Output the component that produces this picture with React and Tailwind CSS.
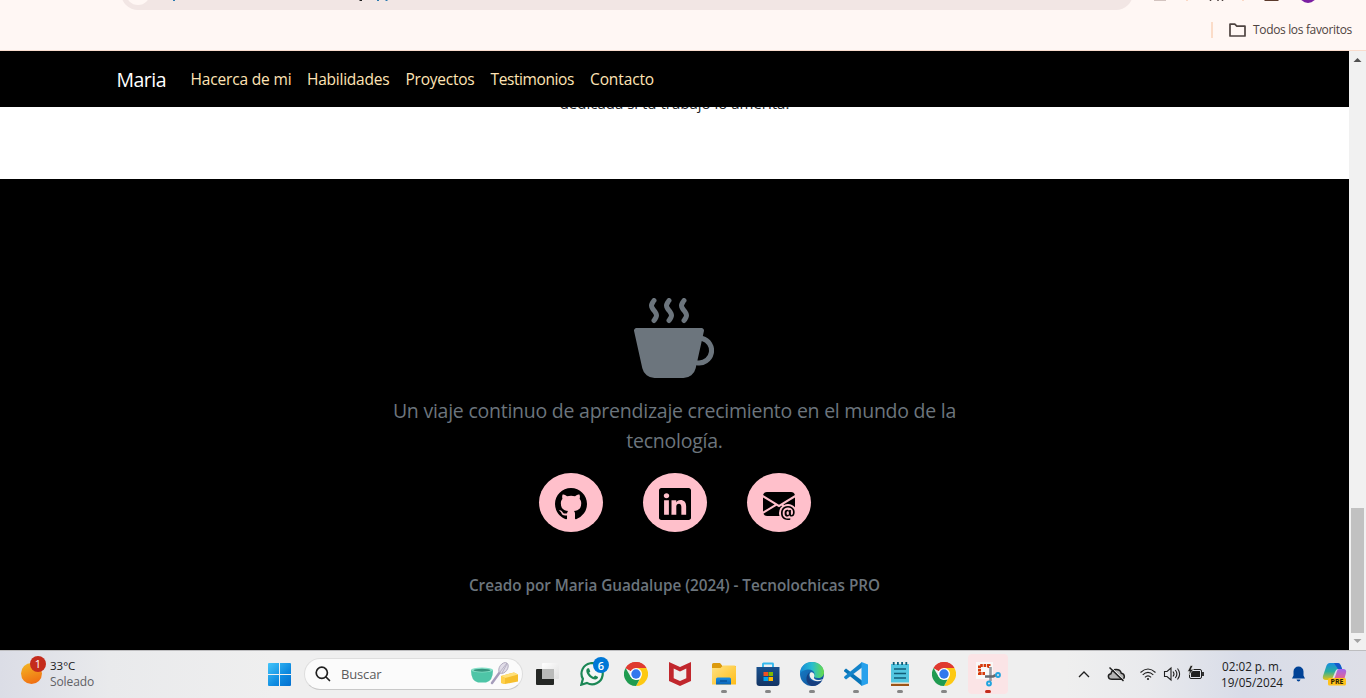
import { BsCupHotFill, BsGithub, BsLinkedin, BsEnvelopeAtFill } from "react-icons/bs";

function BrowserBar() {
  return (
    <header className="h-[51px] shrink-0 overflow-hidden border-b border-[#f9dccd] bg-[#fff7f4]">
      <div className="flex h-[10px] items-end">
        <div className="relative ml-[121px] h-[10px] w-[1012px] overflow-hidden">
          <div className="absolute bottom-0 h-[34px] w-full rounded-full bg-[#f2e6e4]">
            <div className="absolute bottom-[5px] left-[5px] size-[24px] rounded-full bg-[#fff7f4]" />
          </div>
          <svg className="absolute left-0 top-0 h-[2px] w-[300px]" viewBox="121 0 300 2">
            <path d="M173 0h2v1h-2zM377 0h2v1h-2zM385.500 0h2v1h-2z" fill="#2c7ab0" />
            <path d="M359.500 0h2.500v1h-2.500z" fill="#202020" />
          </svg>
        </div>
        <svg className="h-[10px] w-[233px]" viewBox="1133 0 233 10" fill="none">
          <path d="M1154 .5h12" stroke="#d3c4c0" />
          <path d="M1187 0v1M1243 0v1" stroke="#fbd9c6" strokeWidth="2" />
          <path d="M1210.5 0v1M1218 0v1M1222.5 0v1" stroke="#4e4340" strokeWidth="1.5" />
          <path d="M1264 0h15l-1 1h-13z" fill="#5c3a2c" />
          <circle cx="1308" cy="-6" r="9" fill="#7b1fa2" />
        </svg>
      </div>
      <div className="flex h-[40px] items-center justify-end pr-[13px]">
        <span className="mr-[16px] h-[16px] w-[2px] bg-[#fbdcc8]" />
        <svg className="mr-[7px] h-[14px] w-[17px]" viewBox="0 0 17 14" fill="none" stroke="#4e4340" strokeWidth="1.7" strokeLinejoin="round">
          <path d="M1 1.2h4.800l2 2H16v9.800H1z" />
        </svg>
        <span className="w-[100px] whitespace-nowrap text-[12px] tracking-[-0.34px] text-[#4e4340]">Todos los favoritos</span>
      </div>
    </header>
  );
}

function Navbar() {
  return (
    <nav className="relative flex h-[56px] shrink-0 items-center bg-black pl-[116.5px] pt-[2px] text-[15.500px] tracking-[-0.2px] text-[#ffe4b5]">
      <span className="w-[74px] text-[19.500px] tracking-[-0.5px] text-white">Maria</span>
      <span className="w-[116.5px] tracking-[-0.16px]">Hacerca de mi</span>
      <span className="w-[98.5px] tracking-[-0.24px]">Habilidades</span>
      <span className="w-[85px] tracking-[-0.25px]">Proyectos</span>
      <span className="w-[99.5px] tracking-[-0.4px]">Testimonios</span>
      <span className="tracking-[-0.12px]">Contacto</span>
    </nav>
  );
}

function Social({ children }) {
  return (
    <div className="flex h-[59px] w-[64px] items-center justify-center rounded-[50%] bg-[#ffc0cb] pt-[3px] text-[32px] text-black">
      {children}
    </div>
  );
}

function Footer() {
  return (
    <footer className="flex h-[471px] shrink-0 flex-col items-center bg-black pt-[119px] text-[#6c757d]">
      <BsCupHotFill className="mr-[1px] size-[80px]" />
      <p className="mt-[18px] text-center text-[19.500px] leading-[30px] tracking-[-0.24px]">
        Un viaje continuo de aprendizaje crecimiento en el mundo de la
        <br />
        tecnología.
      </p>
      <div className="mt-[17px] flex gap-[40px]">
        <Social><BsGithub /></Social>
        <Social><BsLinkedin /></Social>
        <Social><BsEnvelopeAtFill /></Social>
      </div>
      <p className="mt-[41px] text-[15.300px] font-semibold leading-[24px] tracking-[-0.04px]">Creado por Maria Guadalupe (2024) - Tecnolochicas PRO</p>
    </footer>
  );
}

function Scrollbar() {
  return (
    <div className="flex w-[17px] shrink-0 flex-col items-center bg-[#f1f1f1]">
      <svg className="h-[17px] w-[17px]" viewBox="0 0 17 17"><path d="M4.5 11h8l-4-4z" fill="#505050" /></svg>
      <div className="mt-[440px] h-[125px] w-[13px] bg-[#c1c1c1]" />
      <svg className="h-[17px] w-[17px]" viewBox="0 0 17 17"><path d="M4.5 6h8l-4 4z" fill="#a3a3a3" /></svg>
    </div>
  );
}

function Chrome() {
  return (
    <svg className="size-[24px]" viewBox="0 0 24 24">
      <path d="M12 12 1.6 6A12 12 0 0 1 22.4 6z" fill="#df3a30" />
      <path d="M12 6h10.4A12 12 0 0 1 12 24l5.2-9z" fill="#fdc913" />
      <path d="M1.6 6l5.2 9L12 18l3.500-.5L12 24A12 12 0 0 1 1.6 6z" fill="#1f9b50" />
      <path d="M1.6 6A12 12 0 0 1 22.4 6H12L7 9z" fill="#df3a30" />
      <circle cx="12" cy="12" r="6" fill="#fff" />
      <circle cx="12" cy="12" r="4.7" fill="#3277ed" />
    </svg>
  );
}

function TaskView() {
  return (
    <svg className="size-[24px] overflow-visible" viewBox="0 0 24 24">
      <defs>
        <linearGradient id="tv" x2="1" y2="1"><stop stopColor="#fff" /><stop offset="1" stopColor="#e0e0e0" /></linearGradient>
      </defs>
      <rect x="2" y="7" width="18" height="16" rx="1" fill="#252725" />
      <rect x="8" y="1" width="17" height="16" rx="1" fill="url(#tv)" />
      <path d="M8 7h12v10H8z" fill="#b9bab9" />
    </svg>
  );
}

function WhatsApp() {
  return (
    <div className="relative size-[24px]">
      <svg className="size-[24px]" viewBox="0 0 24 24" fill="none">
        <path d="M1.3 22.700l1.600-5.800a10.600 10.600 0 1 1 4 4z" stroke="#1b8755" strokeWidth="2.200" fill="#f4f6f5" />
        <path d="M8 6.200c-.9.2-1.700 1.200-1.700 2.600 0 4 5 8.800 9 8.800 1.500 0 2.700-1 2.800-2.500l-3-1.700-1.500 1.600c-2-.8-3.600-2.300-4.500-4.200L10.300 9.500 9 6.200z" fill="#1b8755" />
      </svg>
      <span className="absolute -top-[5px] left-[13px] flex size-[16px] items-center justify-center rounded-full bg-[#0078d7] text-[11px] font-semibold leading-none text-white">6</span>
    </div>
  );
}

function McAfee() {
  return (
    <svg className="size-[24px]" viewBox="0 0 24 24">
      <path d="M1 0l11 5L23 0v19l-11 5-11-5z" fill="#c1272d" />
      <path d="M5.700 6.500L12 9.500l6.300-3v9.700L12 19l-6.300-2.800z" fill="#efefef" />
    </svg>
  );
}

function Explorer() {
  return (
    <svg className="size-[24px]" viewBox="0 0 24 24">
      <defs>
        <linearGradient id="ex" x2="1" y2="1"><stop stopColor="#ffe283" /><stop offset="1" stopColor="#ffbd18" /></linearGradient>
        <linearGradient id="ex2" x2="0" y2="1"><stop stopColor="#1a8fe3" /><stop offset="1" stopColor="#0862b5" /></linearGradient>
      </defs>
      <path d="M0 2.500Q0 1 1.500 1H8l2.500 3H24v6H0z" fill="#dc9a0d" />
      <path d="M0 6h8.500L11 3.500h11.500Q24 3.500 24 5v17.500H0z" fill="url(#ex)" />
      <path d="M4 22.500V17q0-1.500 1.500-1.500h12Q19 15.500 19 17v5.500z" fill="url(#ex2)" />
      <path d="M8 19h7" stroke="#07539c" strokeWidth="1.500" />
    </svg>
  );
}

function Store() {
  return (
    <svg className="size-[24px]" viewBox="0 0 24 24">
      <defs><linearGradient id="st" x2="0" y2="1"><stop stopColor="#19518e" /><stop offset="1" stopColor="#133464" /></linearGradient></defs>
      <path d="M7 7V2q0-.5.5-.5h9q.5 0 .5.500v5" fill="none" stroke="#35b9ed" strokeWidth="1.900" />
      <path d="M.5 5h23v16q0 3-3 3h-17q-3 0-3-3z" fill="url(#st)" />
      <path d="M7.500 10H12v4H7.500z" fill="#f25022" /><path d="M12.500 10H17v4h-4.500z" fill="#7fba00" />
      <path d="M7.500 15H12v4H7.500z" fill="#00a4ef" /><path d="M12.500 15H17v4h-4.500z" fill="#ffb900" />
    </svg>
  );
}

function Edge() {
  return (
    <svg className="size-[24px]" viewBox="0 0 24 24">
      <defs>
        <linearGradient id="e1" x2="1"><stop stopColor="#1689d5" /><stop offset=".5" stopColor="#28bdd0" /><stop offset="1" stopColor="#68dc48" /></linearGradient>
        <linearGradient id="e2" x2="1" y2="1"><stop stopColor="#1681cb" /><stop offset="1" stopColor="#124b91" /></linearGradient>
      </defs>
      <circle cx="12" cy="12" r="12" fill="url(#e2)" />
      <path d="M0 12C0 4.500 5 0 12 0s12 5 12 10.500c0 3.500-2.500 5.500-6 5.500-3 0-4.500-1-4-2 1.500-2.500-.5-6.500-5-6.500C5 7.500 1 9 0 12z" fill="url(#e1)" />
      <path d="M10 10c-3 4-.5 9.500 6 9.500 2.500 0 4.600-.7 6.200-1.600A12 12 0 0 1 12 24C5 22.500 5 13 10 10z" fill="#173f80" />
      <path d="M10.500 10.500c-2 2.500-.3 6.500 3.500 8 3 1.100 6 .7 8.500-.6l.7-.9c-1.800.8-3.500 1-5.200 1-3 0-4.500-1.600-4-3 1.200-2-.5-5.500-3.500-4.500z" fill="#efefef" />
    </svg>
  );
}

function VSCode() {
  return (
    <svg className="size-[24px]" viewBox="0 0 24 24">
      <path d="M0 8.200L2 6.500l16 12V24L.3 9.500z" fill="#0875b8" />
      <path d="M0 15.800l2 1.700 16-12V0L.3 14.500z" fill="#1484ca" />
      <path d="M17.500 0L24 2.600v18.800L17.500 24z" fill="#27a1ec" />
    </svg>
  );
}

function Notepad() {
  return (
    <svg className="size-[24px]" viewBox="0 0 24 24">
      <path d="M3 21h18v3H3z" fill="#9c5417" /><path d="M3 20h18v1.800H3z" fill="#f7f0df" />
      <path d="M3 2h18v18.500H3z" fill="#53c6e1" />
      <path d="M5.700 0v3M9.900 0v3M14.100 0v3M18.300 0v3" stroke="#125d78" strokeWidth="1.800" />
      <path d="M6 7h12M6 11.500h12M6 16h12" stroke="#125d78" strokeWidth="1.500" />
    </svg>
  );
}

function Snip() {
  return (
    <svg className="size-[26px]" viewBox="0 0 26 26" fill="none">
      <path d="M0 0h17v17H0z" fill="#f8f8f8" />
      <path d="M3.500 13V3.500h9.500V6" stroke="#d63a0b" strokeWidth="3" strokeDasharray="2.600 .8" />
      <path d="M3 11.500h6" stroke="#d63a0b" strokeWidth="3" strokeDasharray="2.600 .8" />
      <path d="M14.500 5v14" stroke="#9599a0" strokeWidth="2.600" /><path d="M9 14.500h8l3-1.500" stroke="#666a70" strokeWidth="2.600" />
      <circle cx="22" cy="13" r="1.900" stroke="#20a4df" strokeWidth="2" /><circle cx="13" cy="21.500" r="1.900" stroke="#20a4df" strokeWidth="2" />
    </svg>
  );
}

function TaskbarItem({ children, dot, active }) {
  return (
    <div className="flex w-[44px] flex-col items-center">
      <div className={active ? "flex h-[40px] w-[40px] flex-col items-center rounded bg-[#fbe4e6] pt-[8px]" : "flex h-[40px] w-[40px] flex-col items-center pt-[8px]"}>
        <div className="h-[24px] w-[24px]">{children}</div>
        {dot && <div className={active ? "mt-[4px] h-[3px] w-[6px] rounded-full bg-[#c42b1c]" : "mt-[4px] h-[3px] w-[6px] rounded-full bg-[#868686]"} />}
      </div>
    </div>
  );
}

function Search() {
  return (
    <div className="ml-[13px] flex h-[32px] w-[219px] items-center rounded-full border border-[#dedede] border-b-[#c9c9c9] bg-[#fbfbfb] pl-[10px] text-[13px] text-[#5b5b5b]">
      <svg className="size-[16px]" viewBox="0 0 16 16" fill="none" stroke="#202020" strokeWidth="1.700" strokeLinecap="round">
        <circle cx="6.800" cy="6.800" r="5.600" /><path d="M11 11l3.500 3.500" />
      </svg>
      <span className="ml-[10px] w-[130px] pt-[2px] tracking-[-0.15px]">Buscar</span>
      <svg className="h-[24px] w-[48px] shrink-0" viewBox="0 0 48 24">
        <path d="M0 8q0 11 7 12.500h8Q22 19 22 8z" fill="#4ec5a7" /><ellipse cx="11" cy="8" rx="11" ry="2.600" fill="#86e0c8" /><ellipse cx="11" cy="8.300" rx="8.500" ry="1.500" fill="#36957e" />
        <path d="M21 21l8-11" stroke="#a59dbb" strokeWidth="2.500" strokeLinecap="round" />
        <ellipse cx="32.500" cy="6" rx="4" ry="6" transform="rotate(35 32.500 6)" fill="#e1dde8" stroke="#a8a2b8" strokeWidth=".8" />
        <path d="M29 10l7-9M31 11l5-9" stroke="#a8a2b8" strokeWidth=".7" />
        <path d="M30 14l13-3.500 4 2v7L34 22l-4-1z" fill="#f6bf2d" /><path d="M30 14l13-3.500 4 2L34 16z" fill="#ffe07a" /><path d="M30 14l4 2v6l-4-1z" fill="#ffd04b" />
      </svg>
    </div>
  );
}

function Tray() {
  return (
    <svg className="mr-[16px] h-[20px] w-[127px]" viewBox="1078 664 127 20" fill="none" stroke="#202020" strokeWidth="1.300">
      <path d="M1079 677l5-5 5 5" />
      <path d="M1112 679.300c-4.500 0-4.800-5-1-5.600 1-5.500 9-5.500 10.300-.5 4 .5 4 6.100.3 6.100z" fill="#b5b5b5" strokeWidth="1.500" /><path d="M1111.300 667.500l13.500 13" stroke="#efefef" strokeWidth="1" /><path d="M1109.500 667.500l14 13.500" strokeWidth="1.500" />
      <path d="M1140.500 672.500q7.500-7 15 0M1142.700 674.900q5.300-5 10.600 0M1144.900 677.300q3.100-3 6.200 0" strokeWidth="1.100" /><circle cx="1148" cy="679" r="1.100" fill="#202020" stroke="none" />
      <path d="M1164.500 671.500h2.500l4-3.500v12l-4-3.500h-2.500z" strokeWidth="1.100" /><path d="M1173 671.500q2 2.500 0 5M1175.300 670q3.200 4 0 8M1177.500 668.500q4.300 5.500 0 11" strokeWidth="1.100" />
      <rect x="1189.500" y="669.500" width="12" height="9" rx="1.500" strokeWidth="1" /><path d="M1191 671h9v6h-9z" fill="#202020" stroke="none" /><path d="M1203 672v4" strokeWidth="1.800" />
      <path d="M1190.500 665.500l-3 6h2.300l-1.300 4 5-6h-2.500l2-4z" fill="#202020" stroke="#efefef" strokeWidth=".6" />
    </svg>
  );
}

function Taskbar() {
  return (
    <div className="flex h-[48px] shrink-0 items-center border-t border-[#bdbdbf] bg-[linear-gradient(90deg,#dbdde6_0%,#e9eaec_8%,#efefef_20%,#efefef_78%,#e9eaed_84%,#d8dce8_91%,#dedfe7_100%)] pb-[1px] text-[#202020]">
      <div className="relative ml-[21px] mt-[-2px] size-[21px] rounded-full bg-[linear-gradient(160deg,#f3ba26,#f0650f)]">
        <span className="absolute -top-[7px] left-[9px] flex size-[16px] items-center justify-center rounded-full bg-[#c42b1c] text-[11px] leading-none text-white">1</span>
      </div>
      <div className="ml-[8px] w-[218px] text-[11.500px] leading-[16px]">
        <div>33°C</div>
        <div className="text-[12px] tracking-[-0.1px] text-[#5f6065]">Soleado</div>
      </div>
      <svg className="size-[23px]" viewBox="0 0 23 23">
        <defs><linearGradient id="win" gradientUnits="userSpaceOnUse" x2="23" y2="23"><stop stopColor="#43c5fa" /><stop offset=".6" stopColor="#0e8be0" /><stop offset="1" stopColor="#0470d0" /></linearGradient></defs>
        <path d="M0 1q0-1 1-1h10v11H0zM12 0h10q1 0 1 1v10H12zM0 12h11v11H1q-1 0-1-1zM12 12h11v10q0 1-1 1H12z" fill="url(#win)" />
      </svg>
      <Search />
      <div className="ml-[1px] flex">
        <TaskbarItem><TaskView /></TaskbarItem>
        <div className="w-[2px]" />
        <TaskbarItem><WhatsApp /></TaskbarItem>
        <TaskbarItem><Chrome /></TaskbarItem>
        <TaskbarItem><McAfee /></TaskbarItem>
        <TaskbarItem dot><Explorer /></TaskbarItem>
        <TaskbarItem dot><Store /></TaskbarItem>
        <TaskbarItem dot><Edge /></TaskbarItem>
        <TaskbarItem dot><VSCode /></TaskbarItem>
        <TaskbarItem dot><Notepad /></TaskbarItem>
        <TaskbarItem dot><Chrome /></TaskbarItem>
        <TaskbarItem dot active><Snip /></TaskbarItem>
      </div>
      <div className="ml-auto flex items-center pr-[19px]">
        <Tray />
        <div className="w-[61px] text-right text-[11.700px] leading-[16px]">
          <div className="whitespace-nowrap">02:02 p. m.</div>
          <div>19/05/2024</div>
        </div>
        <svg className="ml-[10px] h-[16px] w-[13px]" viewBox="0 0 13 16" fill="#004296"><path d="M0 12.500l1.500-3V5.500a5 5 0 0 1 10 0v4l1.500 3zM4.500 13.500h4q-.5 2-2 2t-2-2z" /></svg>
        <svg className="ml-[18px] h-[24px] w-[24px] overflow-visible" viewBox="0 0 24 24">
          <defs>
            <linearGradient id="c1" x2="0" y2="1"><stop stopColor="#178ce0" /><stop offset=".5" stopColor="#29ae9e" /><stop offset="1" stopColor="#e7c313" /></linearGradient>
            <linearGradient id="c2" x2="0" y2="1"><stop stopColor="#9e65ef" /><stop offset="1" stopColor="#f26280" /></linearGradient>
          </defs>
          <path d="M7 1h8q2 0 3 3l1 3h-4q-2 0-3 3l-2 5q-1 3-4 3H3q-4 0-3-4L3 5q1-4 4-4z" fill="url(#c1)" />
          <path d="M11 1h4q2 0 3 3l1 3h-4z" fill="#1558cc" />
          <path d="M16 7h4q4 0 3 4l-2 7H9q2 0 3-3l2-6q.5-2 2-2z" fill="url(#c2)" />
          <rect x="5" y="16" width="18" height="7.500" rx="1.500" fill="#ffc21c" />
          <text x="14" y="22.300" textAnchor="middle" fontSize="7" fontWeight="700" fill="#2a2100">PRE</text>
        </svg>
      </div>
    </div>
  );
}

export default function App() {
  return (
    <div className="flex h-[698px] w-[1366px] flex-col overflow-hidden bg-white font-['Open_Sans','Noto_Sans',sans-serif]">
      <BrowserBar />
      <div className="flex h-[599px] shrink-0">
        <main className="flex w-[1349px] flex-col">
          <Navbar />
          <section className="flex h-[72px] shrink-0 justify-center overflow-hidden text-[15px] leading-[24px] text-[#212529]">
            <p className="-mt-[16px]">dedicada si tu trabajo lo amerita.</p>
          </section>
          <Footer />
        </main>
        <Scrollbar />
      </div>
      <Taskbar />
    </div>
  );
}
